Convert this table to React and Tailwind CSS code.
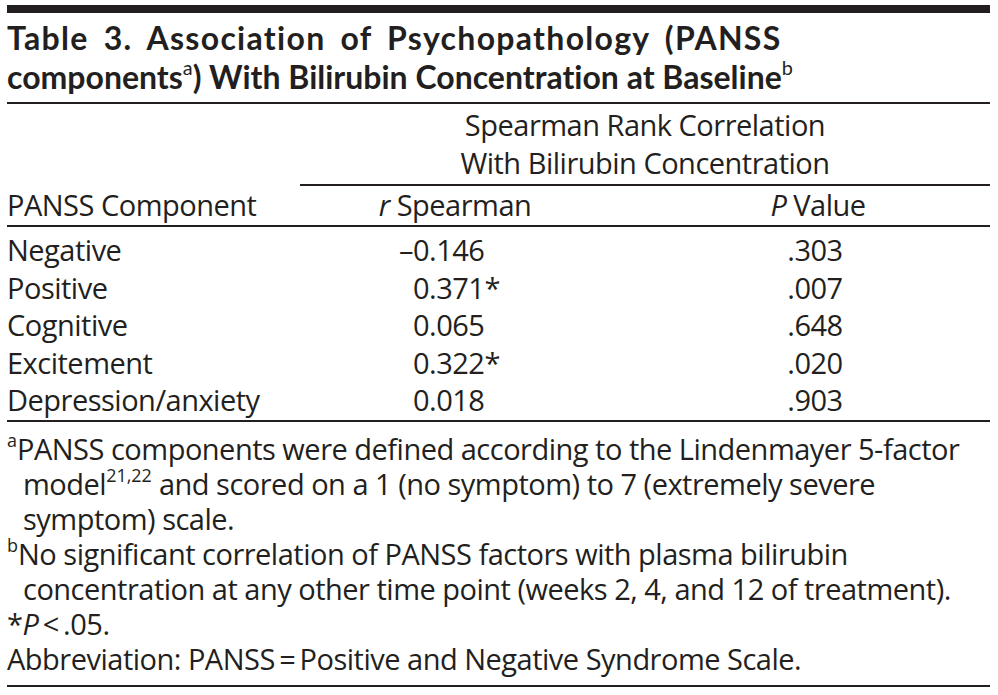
import React from 'react'

const rows = [
  { name: 'Negative', sign: '–', r: '0.146', p: '.303' },
  { name: 'Positive', sign: '', r: '0.371*', p: '.007' },
  { name: 'Cognitive', sign: '', r: '0.065', p: '.648' },
  { name: 'Excitement', sign: '', r: '0.322*', p: '.020' },
  { name: 'Depression/anxiety', sign: '', r: '0.018', p: '.903' },
]

const Sup = ({ children }) => (
  <sup className="text-[0.62em] leading-none font-normal tracking-normal relative -top-[0.72em]">{children}</sup>
)

export default function App() {
  return (
    <div className="w-[998px] h-[695px] bg-white text-[#231f20] font-['Open_Sans',sans-serif]">
      <div className="ml-[7px] w-[983px] pt-[5px]">
        {/* heavy top rule */}
        <div className="h-[8px] bg-[#231f20]" />

        <h1 className="pt-[5px] pb-[6px] font-['Lato',sans-serif] text-[32px] font-bold leading-[39px] [font-variant-ligatures:none]">
          <span className="tracking-[1.3px] [word-spacing:6px]">Table 3. Association of Psychopathology (PANSS</span>
          <br />
          components<Sup>a</Sup>) With Bilirubin Concentration at Baseline<Sup>b</Sup>
        </h1>
        <div className="h-[2px] bg-[#231f20]" />

        {/* header */}
        <div className="grid grid-cols-[293px_310px_1fr] text-[29px] tracking-[-0.5px]">
          <div className="row-span-2 self-end leading-[34px] pb-[3px]">PANSS Component</div>
          <div className="col-span-2 pt-[2px] pb-[2px] text-center leading-[38px]">
            Spearman Rank Correlation
            <br />
            With Bilirubin Concentration
          </div>
          <div className="col-span-2 grid grid-cols-[310px_1fr] border-t-2 border-[#231f20] leading-[34px] pt-[2px] pb-[3px]">
            <div className="text-center">
              <i>r</i> Spearman
            </div>
            <div className="text-center pl-[36px]">
              <i>P</i> Value
            </div>
          </div>
        </div>
        <div className="h-[2px] bg-[#231f20]" />

        {/* body */}
        <div className="pt-[4px] pb-[1.5px] text-[29px] leading-[37.5px] tracking-[-0.5px]">
          {rows.map((row) => (
            <div key={row.name} className="grid grid-cols-[293px_310px_1fr]">
              <div>{row.name}</div>
              <div className="flex pl-[95px]">
                <span className="w-[18px] text-right">{row.sign}</span>
                <span>{row.r}</span>
              </div>
              <div className="text-center pl-[30px]">{row.p}</div>
            </div>
          ))}
        </div>
        <div className="h-[2px] bg-[#231f20]" />

        {/* footnotes */}
        <div className="pt-[9px] pb-[9px] text-[29px] leading-[35px] tracking-[-0.5px]">
          <p className="pl-[16px] -indent-[16px]">
            <Sup>a</Sup>PANSS components were defined according to the Lindenmayer 5-factor
            model<Sup>21,22</Sup> and scored on a 1 (no symptom) to 7 (extremely severe
            symptom) scale.
          </p>
          <p className="pl-[16px] -indent-[16px]">
            <Sup>b</Sup>No significant correlation of PANSS factors with plasma bilirubin
            concentration at any other time point (weeks 2, 4, and 12 of treatment).
          </p>
          <p>
            *<i>P</i>&thinsp;&lt;&thinsp;.05.
          </p>
          <p>Abbreviation: PANSS&thinsp;=&thinsp;Positive and Negative Syndrome Scale.</p>
        </div>
        <div className="h-[2px] bg-[#231f20]" />
      </div>
    </div>
  )
}
